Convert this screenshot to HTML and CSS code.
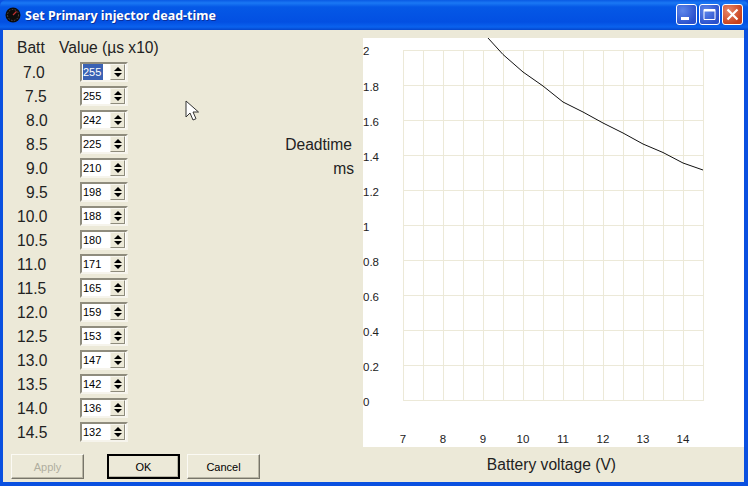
FILE: index.html
```html
<!DOCTYPE html>
<html lang="en">
<head>
<meta charset="utf-8">
<title>Set Primary injector dead-time</title>
<link rel="stylesheet" href="styles.css">
</head>
<body>
<div class="window">
  <header class="titlebar">
    <svg class="app-icon" width="16" height="16" viewBox="0 0 16 16"><circle cx="8" cy="8" r="7.5" fill="#0c0c0c"/><circle cx="8" cy="8" r="5.5" fill="none" stroke="#5a4a4a" stroke-width="1" stroke-dasharray="1.5 1.5"/><path d="M8 8 L11.5 4.5" stroke="#c03030" stroke-width="1.3"/></svg>
    <span class="title">Set Primary injector dead-time</span>
    <div class="controls">
      <span class="ctl ctl-blue"><svg width="21" height="21" viewBox="0 0 21 21"><rect x="5" y="13" width="8" height="3" fill="#fff"/></svg></span>
      <span class="ctl ctl-blue"><svg width="21" height="21" viewBox="0 0 21 21"><path d="M5 5.5h11v10H5z" fill="none" stroke="#fff"/><rect x="5" y="5" width="11" height="2.5" fill="#fff"/></svg></span>
      <span class="ctl ctl-red"><svg width="21" height="21" viewBox="0 0 21 21"><path d="M5.5 5.5l10 10M15.500 5.500l-10 10" stroke="#fff" stroke-width="2.200"/></svg></span>
    </div>
  </header>
  <div class="client">
    <div class="main">
      <section class="table-panel">
        <div class="head"><span class="head-batt">Batt</span><span>Value (µs x10)</span></div>
        <div class="row"><span class="batt i1">7.0</span><span class="spin"><span class="val"><span class="sel">255</span></span><span class="updown"><i class="up"></i><i class="down"></i></span></span></div>
        <div class="row"><span class="batt i2">7.5</span><span class="spin"><span class="val">255</span><span class="updown"><i class="up"></i><i class="down"></i></span></span></div>
        <div class="row"><span class="batt i3">8.0</span><span class="spin"><span class="val">242</span><span class="updown"><i class="up"></i><i class="down"></i></span></span></div>
        <div class="row"><span class="batt i3">8.5</span><span class="spin"><span class="val">225</span><span class="updown"><i class="up"></i><i class="down"></i></span></span></div>
        <div class="row"><span class="batt i3">9.0</span><span class="spin"><span class="val">210</span><span class="updown"><i class="up"></i><i class="down"></i></span></span></div>
        <div class="row"><span class="batt i3">9.5</span><span class="spin"><span class="val">198</span><span class="updown"><i class="up"></i><i class="down"></i></span></span></div>
        <div class="row"><span class="batt">10.0</span><span class="spin"><span class="val">188</span><span class="updown"><i class="up"></i><i class="down"></i></span></span></div>
        <div class="row"><span class="batt">10.5</span><span class="spin"><span class="val">180</span><span class="updown"><i class="up"></i><i class="down"></i></span></span></div>
        <div class="row"><span class="batt">11.0</span><span class="spin"><span class="val">171</span><span class="updown"><i class="up"></i><i class="down"></i></span></span></div>
        <div class="row"><span class="batt">11.5</span><span class="spin"><span class="val">165</span><span class="updown"><i class="up"></i><i class="down"></i></span></span></div>
        <div class="row"><span class="batt">12.0</span><span class="spin"><span class="val">159</span><span class="updown"><i class="up"></i><i class="down"></i></span></span></div>
        <div class="row"><span class="batt">12.5</span><span class="spin"><span class="val">153</span><span class="updown"><i class="up"></i><i class="down"></i></span></span></div>
        <div class="row"><span class="batt">13.0</span><span class="spin"><span class="val">147</span><span class="updown"><i class="up"></i><i class="down"></i></span></span></div>
        <div class="row"><span class="batt">13.5</span><span class="spin"><span class="val">142</span><span class="updown"><i class="up"></i><i class="down"></i></span></span></div>
        <div class="row"><span class="batt">14.0</span><span class="spin"><span class="val">136</span><span class="updown"><i class="up"></i><i class="down"></i></span></span></div>
        <div class="row"><span class="batt">14.5</span><span class="spin"><span class="val">132</span><span class="updown"><i class="up"></i><i class="down"></i></span></span></div>
      </section>
      <div class="y-title"><span>Deadtime</span><span class="ms">ms</span></div>
      <svg class="chart" width="381" height="409" viewBox="363 38 381 409">
        <rect x="363" y="38" width="381" height="409" fill="#fff"/>
        <g class="grid">
          <path d="M403.500 50v351M423.500 50v351M443.500 50v351M463.500 50v351M483.500 50v351M503.500 50v351M523.500 50v351M543.500 50v351M563.500 50v351M583.500 50v351M603.500 50v351M623.500 50v351M643.500 50v351M663.500 50v351M683.500 50v351M703.500 50v351"/>
          <path d="M403 50.500h301M403 85.500h301M403 120.500h301M403 155.500h301M403 190.500h301M403 225.500h301M403 260.500h301M403 295.500h301M403 330.500h301M403 365.500h301M403 400.500h301"/>
        </g>
        <polyline class="curve" points="488,38 503,54.500 523,72 543,86 563,102 583,112 603,123 623,133 643,144 663,152.500 683,163 703,170"/>
        <g class="ylab">
          <text x="363" y="55">2</text><text x="363" y="91">1.8</text><text x="363" y="126">1.6</text><text x="363" y="161">1.4</text><text x="363" y="196">1.2</text><text x="363" y="231">1</text><text x="363" y="266">0.8</text><text x="363" y="301">0.6</text><text x="363" y="336">0.4</text><text x="363" y="371">0.2</text><text x="363" y="406">0</text>
        </g>
        <g class="xlab">
          <text x="403" y="443">7</text><text x="443" y="443">8</text><text x="483" y="443">9</text><text x="523" y="443">10</text><text x="563" y="443">11</text><text x="603" y="443">12</text><text x="643" y="443">13</text><text x="683" y="443">14</text>
        </g>
      </svg>
    </div>
    <footer class="footer">
      <button class="btn" disabled>Apply</button>
      <button class="btn btn-default">OK</button>
      <button class="btn">Cancel</button>
      <span class="x-title">Battery voltage (V)</span>
    </footer>
    <svg class="cursor" width="14" height="22" viewBox="0 0 14 22"><path d="M1 1v16l4-4 3 7 3-1.300-3-6.700h5.500z" fill="#fff" stroke="#333" stroke-width="1"/></svg>
  </div>
</div>
</body>
</html>
```

FILE: styles.css
```css
* { box-sizing: border-box; }
html, body { margin: 0; padding: 0; }
body { width: 748px; height: 486px; overflow: hidden; font-family: "Liberation Sans", Arial, sans-serif; }
.window { width: 748px; height: 486px; display: flex; flex-direction: column; background: #0a50e0; }
.titlebar {
  height: 30px; flex: none; display: flex; align-items: center; padding: 0 5px 0 5px;
  background: linear-gradient(#0a5ae4 0, #1a78f4 3px, #0558e6 7px, #0350e2 22px, #0a62ee 27px, #0446cc 30px);
  border-radius: 6px 6px 0 0;
}
.app-icon { flex: none; }
.title { margin-left: 4px; color: #fff; font: bold 12.500px "Noto Sans", sans-serif; text-shadow: 1px 1px 0 #0a2f9c; }
.controls { margin-left: auto; display: flex; gap: 2px; margin-top: -1px; }
.ctl { width: 21px; height: 21px; border: 1px solid #fff; border-radius: 3px; display: block; position: relative; overflow: hidden; }
.ctl svg { display: block; margin: -1px; }
.ctl-blue { background: radial-gradient(circle at 30% 30%, #5d86ea, #2a50cc 75%); }
.ctl-red { background: radial-gradient(circle at 30% 30%, #e8876a, #c8401c 75%); }
.client {
  flex: 1; margin: 0 4px 4px 3px; background: #ece9d8; position: relative;
  display: flex; flex-direction: column; padding-top: 8px;
}
.main { height: 409px; flex: none; display: flex; }
.table-panel { width: 248px; flex: none; color: #222; }
.head { height: 22px; font-size: 15.600px; display: flex; padding-left: 14px; line-height: 20px; }
.head-batt { width: 42px; }
.row { height: 24px; display: flex; align-items: center; }
.batt { width: 77px; font-size: 15.600px; padding: 2px 0 0 14px; }
.i1 { padding-left: 20px; }
.i2 { padding-left: 22px; }
.i3 { padding-left: 23px; }
.spin { width: 48px; height: 20px; background: #fff; border: 2px solid; border-color: #8f8c7d #f6f4ec #f6f4ec #8f8c7d; display: flex; align-items: stretch; padding: 0 1px 0 0; }
.val { flex: 1; font-size: 11px; line-height: 16px; padding-left: 1px; color: #000; }
.sel { background: #3a62b4; color: #fff; display: inline-block; padding-right: 2px; }
.updown { width: 15px; display: flex; flex-direction: column; background: #ece9d8; border: 1px solid; border-color: #f6f4ec #8f8c7d #8f8c7d #f6f4ec; align-items: center; justify-content: center; gap: 2px; }
.updown i { width: 0; height: 0; display: block; border-left: 4px solid transparent; border-right: 4px solid transparent; }
.up { border-bottom: 4px solid #000; }
.down { border-top: 4px solid #000; }
.y-title { width: 112px; flex: none; padding-top: 95px; display: flex; flex-direction: column; align-items: flex-end; font-size: 15.600px; line-height: 24px; color: #222; padding-right: 11px; }
.ms { margin-right: -2px; }
.chart { display: block; flex: none; }
.grid path { fill: none; stroke: #ece9d8; stroke-width: 1; }
.curve { fill: none; stroke: #111; stroke-width: 1; }
.ylab text, .xlab text { font: 11.500px "Liberation Sans", sans-serif; fill: #222; }
.xlab text { text-anchor: middle; }
.footer { flex: 1; display: flex; align-items: flex-start; padding: 7px 0 0 8px; position: relative; }
.btn {
  width: 73px; height: 25px; font: 11px "Liberation Sans", sans-serif; color: #000; background: #ece9d8; padding: 0;
  border: 1px solid; border-color: #fbfaf4 #77756a #77756a #fbfaf4; box-shadow: inset -1px -1px 0 #b8b5a4; margin-right: 7px;
}
.btn:disabled { color: #b0ae9f; margin-right: 23px; }
.btn-default { border: 2px solid #000; }
.x-title { margin-left: auto; margin-right: 128px; font-size: 15.600px; line-height: 20px; margin-top: 1px; color: #222; }
.cursor { position: absolute; left: 182px; top: 70px; }
```
